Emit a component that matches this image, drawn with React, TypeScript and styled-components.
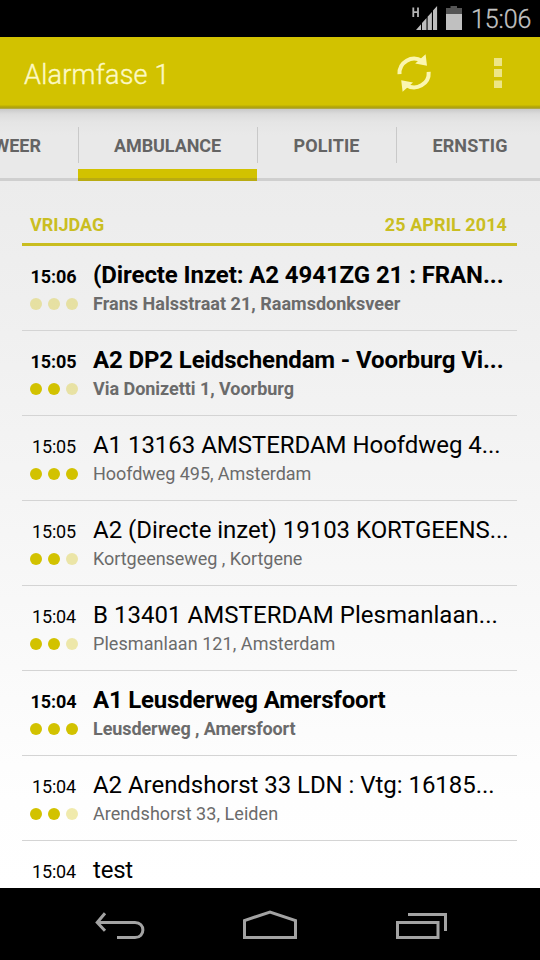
import React from 'react';
import styled, { createGlobalStyle } from 'styled-components';

const accent = '#d2c200';

const GlobalStyle = createGlobalStyle`
  * { box-sizing: border-box; }
  body { margin: 0; background: #000; font-family: Roboto, "Liberation Sans", sans-serif; }
`;

const Screen = styled.div`
  width: 540px;
  height: 960px;
  overflow: hidden;
  display: flex;
  flex-direction: column;
  background: linear-gradient(#e9e9e9 0, #ececec 180px, #efefef 300px, #fefefe 800px, #fff 888px);
`;

const StatusBar = styled.div`
  height: 37px;
  flex: none;
  background: #000;
  display: flex;
  justify-content: flex-end;
`;

const Clock = styled.span`
  width: 70px;
  padding-left: 1px;
  font-size: 25px;
  line-height: 39px;
  font-weight: 300;
  letter-spacing: -0.1px;
  color: #c4c4c4;
  -webkit-text-stroke: 0.3px #c4c4c4;
  white-space: nowrap;
`;

const ActionBar = styled.header`
  height: 72px;
  flex: none;
  padding: 0 0 0 24px;
  display: flex;
  background: linear-gradient(${accent} 0 68px, #bcae02 69px, #a99f18 71px, #b9b26c 72px);
`;

const AppTitle = styled.h1`
  flex: 1;
  margin: 0;
  font-size: 27px;
  line-height: 76px;
  font-weight: 300;
  letter-spacing: 0.25px;
  color: #fdf9c4;
  -webkit-text-stroke: 0.4px #fdf9c4;
`;

const TabStrip = styled.nav`
  height: 72px;
  flex: none;
  display: flex;
  width: 541px;
  background:
    linear-gradient(#cfcfcf, #cfcfcf) 0 69px / 100% 3px no-repeat,
    linear-gradient(#c9c9c9 0, #dcdcdc 5px, #e5e5e5 13px, #e9e9e9 26px, #e9e9e9 72px);
`;

const Tab = styled.div<{ $width: number; $active?: boolean; $first?: boolean; $spacing: number }>`
  width: ${p => p.$width}px;
  flex: none;
  display: flex;
  justify-content: ${p => (p.$first ? 'flex-end' : 'center')};
  padding-right: ${p => (p.$first ? 37 : 0)}px;
  font-size: 18px;
  line-height: 74px;
  font-weight: 700;
  letter-spacing: ${p => p.$spacing}px;
  color: #646464;
  background:
    linear-gradient(#c9c9c9, #c9c9c9) 0 18px / ${p => (p.$first ? 0 : 1)}px 36px no-repeat,
    linear-gradient(${accent} 0 9px, #b9ab12 9px 12px) 0 60px / 100% ${p => (p.$active ? 12 : 0)}px no-repeat;
`;

const List = styled.main`
  flex: 1;
  min-height: 0;
  overflow: hidden;
  padding: 22px 23px 0 22px;
`;

const SectionHeader = styled.div`
  height: 43px;
  padding: 0 10px 0 8px;
  border-bottom: 3px solid #c9bd20;
  display: flex;
  justify-content: space-between;
  font-size: 18px;
  line-height: 44px;
  font-weight: 700;
  color: #cabe22;
`;

const HeaderText = styled.span<{ $spacing: number }>`
  letter-spacing: ${p => p.$spacing}px;
`;

const Row = styled.article<{ $unread?: boolean }>`
  height: 85px;
  display: flex;
  border-bottom: 1px solid #d4d4d4;
  font-weight: ${p => (p.$unread ? 700 : 400)};
`;

const Meta = styled.div`
  width: 71px;
  flex: none;
  padding-top: 19px;
`;

const Time = styled.div<{ $unread?: boolean }>`
  width: ${p => (p.$unread ? 63 : 64)}px;
  text-align: center;
  font-size: 18px;
  line-height: 24px;
  letter-spacing: ${p => (p.$unread ? -0.1 : -0.2)}px;
  color: #000;
`;

const Dots = styled.div`
  display: flex;
  gap: 6px;
  padding: 9px 0 0 8px;
`;

const Dot = styled.i<{ $on: boolean }>`
  width: 12px;
  height: 12px;
  border-radius: 50%;
  background: ${accent};
  opacity: ${p => (p.$on ? 1 : 0.32)};
`;

const Copy = styled.div`
  padding-top: 13px;
  white-space: nowrap;
`;

const Title = styled.div<{ $spacing: number }>`
  font-size: 24px;
  line-height: 32px;
  letter-spacing: ${p => p.$spacing}px;
  color: #000;
`;

const Address = styled.div<{ $spacing: number }>`
  font-size: 18px;
  line-height: 26px;
  letter-spacing: ${p => p.$spacing}px;
  color: #6b6b6b;
`;

const NavBar = styled.footer`
  height: 72px;
  flex: none;
  background: #000;
  display: flex;
  justify-content: center;
`;

type Alarm = { time: string; level: number; title: string; place: string; unread?: boolean; ts: number; ps: number };

const alarms: Alarm[] = [
  { time: '15:06', level: 0, title: '(Directe Inzet: A2 4941ZG 21 : FRAN...', place: 'Frans Halsstraat 21, Raamsdonksveer', unread: true, ts: -0.09, ps: 0.02 },
  { time: '15:05', level: 2, title: 'A2 DP2 Leidschendam - Voorburg Vi...', place: 'Via Donizetti 1, Voorburg', unread: true, ts: -0.12, ps: -0.04 },
  { time: '15:05', level: 3, title: 'A1 13163 AMSTERDAM Hoofdweg 4...', place: 'Hoofdweg 495, Amsterdam', ts: -0.04, ps: -0.05 },
  { time: '15:05', level: 2, title: 'A2 (Directe inzet) 19103 KORTGEENS...', place: 'Kortgeenseweg , Kortgene', ts: -0.03, ps: -0.04 },
  { time: '15:04', level: 2, title: 'B 13401 AMSTERDAM Plesmanlaan...', place: 'Plesmanlaan 121, Amsterdam', ts: 0.04, ps: 0.06 },
  { time: '15:04', level: 3, title: 'A1 Leusderweg Amersfoort', place: 'Leusderweg , Amersfoort', unread: true, ts: -0.19, ps: -0.1 },
  { time: '15:04', level: 2, title: 'A2 Arendshorst 33 LDN : Vtg: 16185...', place: 'Arendshorst 33, Leiden', ts: -0.04, ps: 0.05 },
  { time: '15:04', level: 2, title: 'test', place: '', ts: -0.2, ps: 0 },
];

const StatusIcons = () => (
  <svg width="60" height="37" viewBox="410 0 60 37">
    <path d="M413.3 7.5v9.5M418 7.5v9.5M413.3 12.2h4.7" stroke="#b5b5b5" strokeWidth="1.8" fill="none" />
    <path d="M416 30L421 24.3V30zM422 23.1l4.500-5V30H422zM427.600 16.800l4.300-4.900V30h-4.300zM433 10.600l4.100-4.700V30H433z" fill="#bdbdbd" />
    <path d="M446 8h4.500V6h6.500v2h5v6h-16z" fill="#555" />
    <path d="M446 14h16v16h-16z" fill="#c0c0c0" />
  </svg>
);

const ActionIcons = () => (
  <svg width="150" height="68" viewBox="390 37 150 68" fill="none">
    <path d="M399.500 74.200A14.600 14.600 0 0 1 422 61M428.700 71.800A14.600 14.600 0 0 1 406.200 85" stroke="#fbf6b0" strokeWidth="4" />
    <path d="M425.600 54.200L427 65.800L415.200 63.600zM402.600 91.800L401.200 80.200L413 82.400z" fill="#fbf6b0" />
    <path d="M494 58h8v8h-8zM494 69h8v8h-8zM494 80.500h8v7.500h-8z" fill="#ede587" />
  </svg>
);

const NavIcons = () => (
  <svg width="400" height="72" viewBox="70 888 400 72" fill="none" stroke="#a3a3a3" strokeWidth="3">
    <path d="M105 913.200l-7.800 9.300 7.800 8.300M98 922.500h37c10.500 0 10.500 15 0 15h-18" />
    <path d="M244.500 937.500v-17L270 912l25.500 8.500v17z" />
    <path d="M397.500 922.500h40.500v15h-40.500zM408 914.500h37.500V931" />
  </svg>
);

export default function App() {
  return (
    <Screen>
      <GlobalStyle />
      <StatusBar>
        <StatusIcons />
        <Clock>15:06</Clock>
      </StatusBar>
      <ActionBar>
        <AppTitle>Alarmfase 1</AppTitle>
        <ActionIcons />
      </ActionBar>
      <TabStrip>
        <Tab $width={78} $first $spacing={0}>BRANDWEER</Tab>
        <Tab $width={179} $active $spacing={-0.08}>AMBULANCE</Tab>
        <Tab $width={139} $spacing={0.1}>POLITIE</Tab>
        <Tab $width={148} $spacing={0.15}>ERNSTIG</Tab>
      </TabStrip>
      <List>
        <SectionHeader>
          <HeaderText $spacing={0}>VRIJDAG</HeaderText>
          <HeaderText $spacing={0.08}>25 APRIL 2014</HeaderText>
        </SectionHeader>
        {alarms.map((a, i) => (
          <Row key={i} $unread={a.unread}>
            <Meta>
              <Time $unread={a.unread}>{a.time}</Time>
              <Dots>
                {[1, 2, 3].map(n => <Dot key={n} $on={n <= a.level} />)}
              </Dots>
            </Meta>
            <Copy>
              <Title $spacing={a.ts}>{a.title}</Title>
              <Address $spacing={a.ps}>{a.place}</Address>
            </Copy>
          </Row>
        ))}
      </List>
      <NavBar>
        <NavIcons />
      </NavBar>
    </Screen>
  );
}
